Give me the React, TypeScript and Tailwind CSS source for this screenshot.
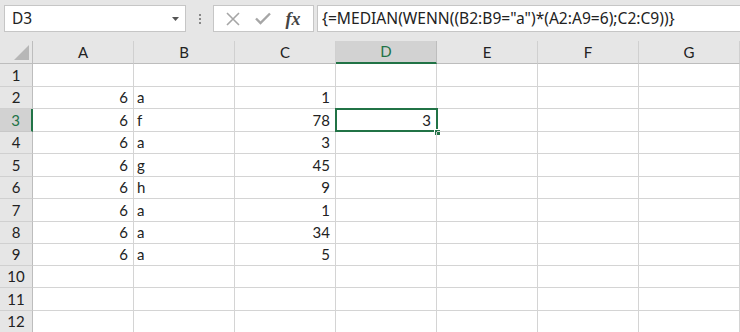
import React from "react";

const cols = ["A", "B", "C", "D", "E", "F", "G"];
const rowHeights = [23, 22, 23, 22, 23, 22, 23, 22, 22, 22, 23, 22];
const data: Record<number, [string, string, string, string]> = {
  2: ["6", "a", "1", ""],
  3: ["6", "f", "78", "3"],
  4: ["6", "a", "3", ""],
  5: ["6", "g", "45", ""],
  6: ["6", "h", "9", ""],
  7: ["6", "a", "1", ""],
  8: ["6", "a", "34", ""],
  9: ["6", "a", "5", ""],
};

const cellFont = { fontFamily: "Lato, 'Liberation Sans', sans-serif" };

export default function App() {
  return (
    <div className="w-[740px] h-[332px] overflow-hidden bg-white" style={cellFont}>
      {/* toolbar */}
      <div className="h-[41px] bg-[#e6e6e6] flex items-start pt-[5px] pl-[4px]">
        <div className="w-[182px] h-[27px] bg-white border border-[#c6c6c6] flex items-center justify-between pl-[7px] pr-[6px]">
          <span className="text-[15.5px] text-[#222]" style={{ fontFamily: "'Noto Sans', sans-serif" }}>D3</span>
          <svg width="7" height="4" viewBox="0 0 7 4"><path d="M0 0h7L3.5 4z" fill="#555" /></svg>
        </div>
        <div className="w-[27px] h-[27px] flex flex-col items-center justify-center gap-[2px]">
          <div className="w-[2px] h-[2px] bg-[#888]" />
          <div className="w-[2px] h-[2px] bg-[#888]" />
          <div className="w-[2px] h-[2px] bg-[#888]" />
        </div>
        <div className="w-[101px] h-[27px] bg-white border border-[#c6c6c6] flex items-center">
          <div className="w-[30px] flex justify-center ml-[4px]">
            <svg width="14" height="14" viewBox="0 0 14 14"><path d="M1 1L13 13M13 1L1 13" stroke="#a6a6a6" strokeWidth="1.6" /></svg>
          </div>
          <div className="w-[30px] flex justify-center">
            <svg width="16" height="13" viewBox="0 0 16 13"><path d="M1 6.5L5.5 11L15 1.5" stroke="#a6a6a6" strokeWidth="2.4" fill="none" /></svg>
          </div>
          <div className="w-[30px] flex justify-center">
            <span className="italic font-bold text-[18px] text-[#444] leading-none" style={{ fontFamily: "'Liberation Serif', serif" }}>fx</span>
          </div>
        </div>
        <div className="ml-[3px] flex-1 h-[27px] bg-white border border-[#c6c6c6] border-r-0 flex items-center pl-[4px]">
          <span className="text-[15.6px] text-[#222] whitespace-nowrap" style={{ fontFamily: "'Noto Sans', sans-serif" }}>
            {'{=MEDIAN(WENN((B2:B9="a")*(A2:A9=6);C2:C9))}'}
          </span>
        </div>
      </div>

      {/* grid */}
      <div className="grid grid-cols-[33px_101px_101px_101px_101px_101px_101px_101px]">
        {/* header row */}
        <div className="h-[23px] bg-[#e6e6e6] border-r border-b border-[#bdbdbd] flex items-end justify-end pr-[3px] pb-[3px]">
          <svg width="15" height="15" viewBox="0 0 15 15"><path d="M15 0V15H0z" fill="#b7b7b7" /></svg>
        </div>
        {cols.map((c) =>
          c === "D" ? (
            <div key={c} className="h-[23px] bg-[#d2d2d2] border-r border-[#bdbdbd] border-b-2 border-b-[#217346] flex items-center justify-center text-[15px] text-[#217346]">
              {c}
            </div>
          ) : (
            <div key={c} className="h-[23px] bg-[#e6e6e6] border-r border-b border-[#d0d0d0] border-b-[#bdbdbd] flex items-center justify-center text-[15px] text-[#222]">
              {c}
            </div>
          )
        )}

        {rowHeights.map((h, i) => {
          const r = i + 1;
          const row = data[r];
          const sel = r === 3;
          return (
            <React.Fragment key={r}>
              <div
                className={
                  sel
                    ? "bg-[#d2d2d2] border-b border-[#c8c8c8] border-r-2 border-r-[#217346] flex items-center justify-center text-[15px] text-[#217346]"
                    : "bg-[#e6e6e6] border-b border-[#d0d0d0] border-r border-r-[#bdbdbd] flex items-center justify-center text-[15px] text-[#222]"
                }
                style={{ height: h }}
              >
                {r}
              </div>
              {cols.map((c, ci) => {
                const v = row && ci < 4 ? row[ci] : "";
                const left = ci === 1;
                const isSel = sel && c === "D";
                return (
                  <div
                    key={c}
                    className={
                      "relative border-r border-b border-[#d4d4d4] flex items-center text-[15px] text-[#222] " +
                      (left ? "justify-start pl-[3px]" : "justify-end pr-[5px]")
                    }
                    style={{ height: h }}
                  >
                    {v}
                    {isSel && (
                      <>
                        <div className="absolute left-[-1px] top-[-1px] right-[-2px] bottom-[-1px] border-2 border-[#217346]" />
                        <div className="absolute right-[-5px] bottom-[-5px] w-[7px] h-[7px] bg-[#217346] border border-white" />
                      </>
                    )}
                  </div>
                );
              })}
            </React.Fragment>
          );
        })}
      </div>
    </div>
  );
}
